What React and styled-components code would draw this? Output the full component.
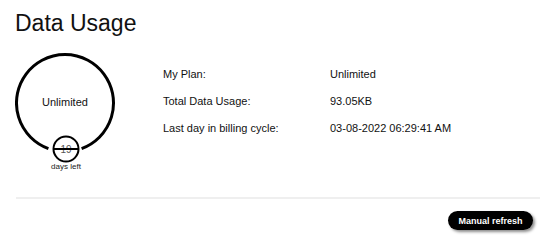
import React from 'react';
import styled, { createGlobalStyle } from 'styled-components';

const GlobalStyle = createGlobalStyle`
  html, body {
    margin: 0;
    padding: 0;
    background: #ffffff;
  }
  body {
    font-family: "Liberation Sans", Arial, sans-serif;
    color: #111111;
  }
`;

const Page = styled.div`
  width: 540px;
  height: 248px;
  box-sizing: border-box;
  padding: 10px 7px 0 15px;
  overflow: hidden;
`;

const Title = styled.h1`
  margin: 0;
  font-size: 23px;
  line-height: 27px;
  font-weight: 400;
  color: #111;
`;

const Content = styled.div`
  display: flex;
  align-items: flex-start;
  margin-top: 13px;
`;

const Gauge = styled.svg`
  display: block;
  flex: none;
  width: 104px;
  height: 124px;
  margin-right: 44px;
`;

const InfoGrid = styled.div`
  display: grid;
  grid-template-columns: 167px auto;
  grid-auto-rows: 27px;
  align-items: center;
  padding-top: 10px;
  font-size: 11px;
  color: #111;
`;

const Divider = styled.div`
  height: 2px;
  background: #efefef;
  margin: 23px -7px 0 1px;
`;

const Footer = styled.div`
  display: flex;
  justify-content: flex-end;
  margin-top: 12px;
`;

const RefreshButton = styled.button`
  width: 85px;
  height: 19px;
  padding: 0;
  border: none;
  border-radius: 10px;
  background: #000;
  color: #fff;
  font-family: "Liberation Sans", Arial, sans-serif;
  font-size: 9px;
  font-weight: 700;
  box-shadow: 2px 2px 3px rgba(0, 0, 0, 0.45);
  cursor: pointer;
`;

const rows = [
  ['My Plan:', 'Unlimited'],
  ['Total Data Usage:', '93.05KB'],
  ['Last day in billing cycle:', '03-08-2022 06:29:41 AM'],
];

function UsageGauge() {
  const cx = 50;
  const cy = 53;
  const r = 48.5;
  const gap = 20 * Math.PI / 180;
  const a1 = Math.PI / 2 + gap;
  const a2 = Math.PI / 2 - gap;
  const x1 = cx + r * Math.cos(a1);
  const y1 = cy + r * Math.sin(a1);
  const x2 = cx + r * Math.cos(a2);
  const y2 = cy + r * Math.sin(a2);
  return (
    <Gauge viewBox="0 0 104 124">
      <path
        d={`M ${x1} ${y1} A ${r} ${r} 0 1 1 ${x2} ${y2}`}
        fill="none"
        stroke="#000"
        strokeWidth="3"
      />
      <text x={cx} y="56" textAnchor="middle" fontSize="11" fill="#111" fontFamily="Liberation Sans, Arial, sans-serif">
        Unlimited
      </text>
      <circle cx="51" cy="99" r="12.5" fill="#fff" stroke="#000" strokeWidth="2" />
      <text x="51" y="102.5" textAnchor="middle" fontSize="10" fill="#555" fontFamily="Liberation Sans, Arial, sans-serif">
        19
      </text>
      <line x1="38.5" y1="99" x2="63.5" y2="99" stroke="#000" strokeWidth="2" />
      <text x="51" y="119" textAnchor="middle" fontSize="8" fill="#222" fontFamily="Liberation Sans, Arial, sans-serif">
        days left
      </text>
    </Gauge>
  );
}

export default function App() {
  return (
    <Page>
      <GlobalStyle />
      <Title>Data Usage</Title>
      <Content>
        <UsageGauge />
        <InfoGrid>
          {rows.map(([label, value]) => (
            <React.Fragment key={label}>
              <span>{label}</span>
              <span>{value}</span>
            </React.Fragment>
          ))}
        </InfoGrid>
      </Content>
      <Divider />
      <Footer>
        <RefreshButton>Manual refresh</RefreshButton>
      </Footer>
    </Page>
  );
}
